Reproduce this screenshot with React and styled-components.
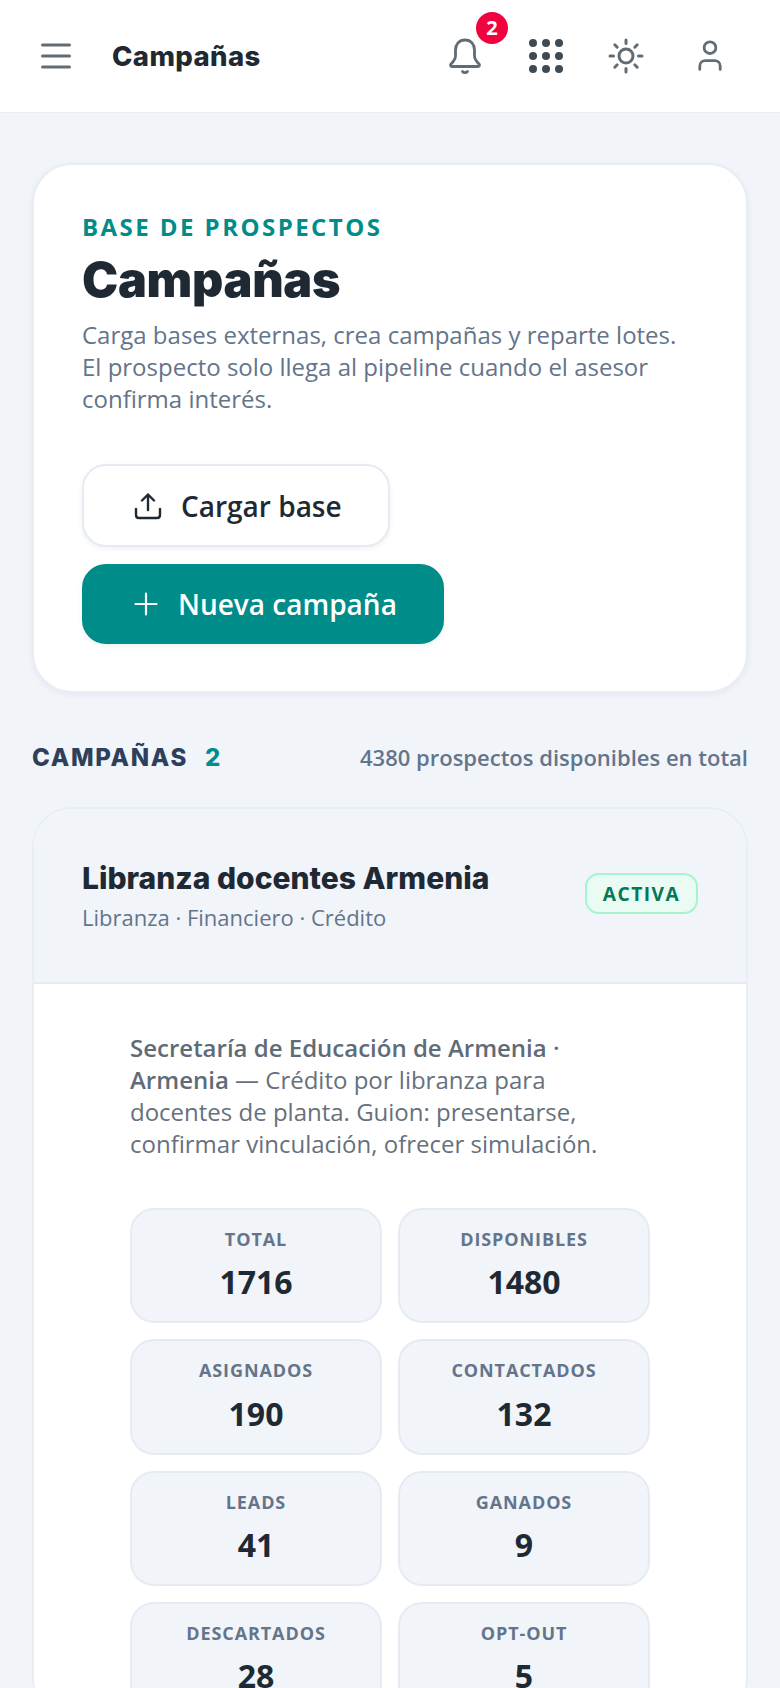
import React from "react";
import styled, { createGlobalStyle } from "styled-components";

const Global = createGlobalStyle`
  html, body { margin: 0; padding: 0; height: 1688px; overflow: hidden; background: #f1f4f9; }
  body { font-family: "Open Sans", "Noto Sans", sans-serif; color: #1f2933; }
  * { box-sizing: border-box; }
  #root { height: 1688px; overflow: hidden; }
`;

const Header = styled.header`
  height: 113px;
  background: #fff;
  border-bottom: 1px solid #e9edf3;
  display: flex;
  align-items: center;
  padding: 0 57px 0 41px;
`;
const Menu = styled.svg`
  width: 30px;
  height: 26px;
  display: block;
  margin-right: 41px;
`;
const HeaderTitle = styled.div`
  font-family: Inter, sans-serif;
  font-weight: 800;
  font-size: 27.5px;
  letter-spacing: 0.4px;
  color: #1f2933;
  flex: 1;
`;
const Icons = styled.div`
  display: flex;
  align-items: center;
`;
const IconSlot = styled.div`
  position: relative;
  width: ${(p) => p.$w}px;
  margin-right: ${(p) => p.$mr || 0}px;
  display: flex;
  justify-content: center;
  svg { display: block; }
`;
const Dot = styled.span`
  position: absolute;
  top: -26px;
  left: 28px;
  width: 32px;
  height: 32px;
  border-radius: 50%;
  background: #f0043f;
  color: #fff;
  font-size: 20px;
  font-weight: 700;
  display: flex;
  align-items: center;
  justify-content: center;
`;

const Main = styled.main`
  padding: 50px 32px 0;
`;
const Hero = styled.section`
  background: #fff;
  border: 2px solid #e9edf4;
  border-radius: 40px;
  box-shadow: 0 2px 6px rgba(30, 50, 80, 0.06);
  padding: 49px 48px 46px;
  height: 530px;
`;
const Eyebrow = styled.div`
  font-size: 24px;
  font-weight: 700;
  letter-spacing: 2.45px;
  line-height: 26px;
  color: #008c88;
`;
const HeroTitle = styled.h1`
  margin: 10px 0 0;
  font-family: Inter, sans-serif;
  font-weight: 900;
  font-size: 48.5px;
  line-height: 60px;
  letter-spacing: -0.3px;
  color: #1f2933;
`;
const HeroText = styled.p`
  margin: 9px 0 0;
  font-size: 24px;
  line-height: 32px;
  color: #64748b;
`;
const Buttons = styled.div`
  display: flex;
  flex-direction: column;
  align-items: flex-start;
  gap: 17px;
  margin-top: 49px;
`;
const Button = styled.div`
  display: flex;
  align-items: center;
  gap: ${(p) => (p.$primary ? 18 : 19)}px;
  padding-left: ${(p) => (p.$primary ? 48 : 50)}px;
  width: ${(p) => p.$w}px;
  height: ${(p) => p.$h}px;
  border-radius: 24px;
  font-size: 28px;
  font-weight: 600;
  background: ${(p) => (p.$primary ? "#008c88" : "#fff")};
  color: ${(p) => (p.$primary ? "#fff" : "#1f2933")};
  border: 2px solid ${(p) => (p.$primary ? "#008c88" : "#e6ebf3")};
  box-shadow: 0 2px 5px rgba(30, 50, 80, 0.07);
  svg { display: block; flex: none; }
`;

const SectionHead = styled.div`
  margin-top: 47px;
  height: 34px;
  display: flex;
  align-items: center;
  justify-content: space-between;
`;
const SectionTitle = styled.div`
  font-family: Inter, sans-serif;
  font-weight: 800;
  font-size: 24px;
  letter-spacing: 1.7px;
  color: #2d3f5b;
  span { color: #008c88; margin-left: 17px; }
`;
const SectionNote = styled.div`
  font-size: 22px;
  font-weight: 600;
  color: #64748b;
`;

const Card = styled.section`
  margin-top: 33px;
  background: #fff;
  border: 2px solid #e9edf4;
  border-radius: 40px;
  overflow: hidden;
`;
const CardHead = styled.div`
  background: #f1f4f9;
  border-bottom: 2px solid #e6ebf3;
  height: 175px;
  padding: 50px 48px 0;
  display: flex;
  justify-content: space-between;
  align-items: flex-start;
`;
const CardTitle = styled.h2`
  margin: 0;
  font-family: Inter, sans-serif;
  font-weight: 800;
  font-size: 30px;
  line-height: 38px;
  color: #1f2933;
`;
const CardSub = styled.div`
  margin-top: 5px;
  font-size: 22px;
  line-height: 30px;
  color: #64748b;
`;
const Badge = styled.div`
  margin-top: 14px;
  width: 113px;
  height: 41px;
  border-radius: 14px;
  background: #e9fbf3;
  border: 2px solid #a7f3d0;
  color: #047857;
  font-size: 19.2px;
  font-weight: 700;
  letter-spacing: 1.5px;
  display: flex;
  align-items: center;
  justify-content: center;
`;
const CardBody = styled.div`
  padding: 48px 96px 0;
`;
const Desc = styled.p`
  margin: 0;
  font-size: 24px;
  line-height: 32px;
  color: #66717d;
  b { font-weight: 600; color: #5f6b76; }
`;
const Stats = styled.div`
  margin-top: 48px;
  display: grid;
  grid-template-columns: 252px 252px;
  gap: 16px;
`;
const Stat = styled.div`
  background: #f1f4f9;
  border: 2px solid #e6ebf3;
  border-radius: 24px;
  padding: 17px 8px 17px;
  text-align: center;
`;
const StatLabel = styled.div`
  font-size: 18px;
  font-weight: 700;
  line-height: 25.3px;
  letter-spacing: 0.9px;
  color: #64748b;
`;
const StatValue = styled.div`
  margin-top: 8px;
  font-size: 32px;
  font-weight: 700;
  line-height: 44px;
  color: #1f2933;
`;

const stats = [
  ["TOTAL", "1716"],
  ["DISPONIBLES", "1480"],
  ["ASIGNADOS", "190"],
  ["CONTACTADOS", "132"],
  ["LEADS", "41"],
  ["GANADOS", "9"],
  ["DESCARTADOS", "28"],
  ["OPT-OUT", "5"],
];

const grey = "#626c74";

export default function App() {
  return (
    <>
      <Global />
      <Header>
        <Menu viewBox="0 0 30 26" fill="none" stroke={grey} strokeWidth="3" strokeLinecap="round">
          <path d="M1.5 2h27M1.5 13h27M1.5 24h27" />
        </Menu>
        <HeaderTitle>Campañas</HeaderTitle>
        <Icons>
          <IconSlot $w={34} $mr={47}>
            <svg width="34" height="37" viewBox="0 0 34 37" fill="none" stroke={grey} strokeWidth="2.8" strokeLinecap="round" strokeLinejoin="round">
              <path d="M17 2c-6 0-9.500 4.500-9.500 10v6c0 3-2 5.500-4.500 8-1 1.200-.4 2.500 1 2.500h26c1.400 0 2-1.300 1-2.500-2.500-2.500-4.500-5-4.500-8v-6C26.500 6.500 23 2 17 2z" />
              <path d="M14.500 33.500c1.300 1.500 3.700 1.500 5 0" />
            </svg>
            <Dot>2</Dot>
          </IconSlot>
          <IconSlot $w={34} $mr={45}>
            <svg width="34" height="34" viewBox="0 0 34 34" fill="#3e4b55">
              {[4, 17, 30].flatMap((y) =>
                [4, 17, 30].map((x) => <circle key={`${x}-${y}`} cx={x} cy={y} r="4" />)
              )}
            </svg>
          </IconSlot>
          <IconSlot $w={36} $mr={53}>
            <svg width="36" height="36" viewBox="0 0 36 36" fill="none" stroke={grey} strokeWidth="3" strokeLinecap="round">
              <circle cx="18" cy="18" r="7" />
              <path d="M18 2v3.500M18 30.500v3.500M2 18h3.500M30.500 18H34M6.800 6.800l2.400 2.400M26.800 26.800l2.400 2.400M6.800 29.200l2.400-2.400M26.800 9.200l2.400-2.400" />
            </svg>
          </IconSlot>
          <IconSlot $w={26}>
            <svg width="28" height="34" viewBox="0 0 28 34" fill="none" stroke={grey} strokeWidth="3" strokeLinecap="round">
              <circle cx="14" cy="8" r="6.300" />
              <path d="M3 31.500v-3.500c0-3.500 2.500-6 6-6h10c3.500 0 6 2.500 6 6v3.500" />
            </svg>
          </IconSlot>
        </Icons>
      </Header>
      <Main>
        <Hero>
          <Eyebrow>BASE DE PROSPECTOS</Eyebrow>
          <HeroTitle>Campañas</HeroTitle>
          <HeroText>
            Carga bases externas, crea campañas y reparte lotes.
            <br />
            El prospecto solo llega al pipeline cuando el asesor
            <br />
            confirma interés.
          </HeroText>
          <Buttons>
            <Button $w={308} $h={83}>
              <svg width="28" height="28" viewBox="0 0 28 28" fill="none" stroke="#1f2933" strokeWidth="2.4" strokeLinecap="round" strokeLinejoin="round">
                <path d="M14 18V2.500M8 8.500l6-6 6 6" />
                <path d="M2 17v6c0 1.800 1.200 3 3 3h18c1.800 0 3-1.200 3-3v-6" />
              </svg>
              Cargar base
            </Button>
            <Button $primary $w={362} $h={80}>
              <svg width="28" height="28" viewBox="0 0 28 28" fill="none" stroke="#fff" strokeWidth="2.2" strokeLinecap="round">
                <path d="M14 3.500v21M3.500 14h21" />
              </svg>
              Nueva campaña
            </Button>
          </Buttons>
        </Hero>
        <SectionHead>
          <SectionTitle>
            CAMPAÑAS<span>2</span>
          </SectionTitle>
          <SectionNote>4380 prospectos disponibles en total</SectionNote>
        </SectionHead>
        <Card>
          <CardHead>
            <div>
              <CardTitle>Libranza docentes Armenia</CardTitle>
              <CardSub>Libranza · Financiero · Crédito</CardSub>
            </div>
            <Badge>ACTIVA</Badge>
          </CardHead>
          <CardBody>
            <Desc>
              <b>
                Secretaría de Educación de Armenia ·
                <br />
                Armenia
              </b>{" "}
              — Crédito por libranza para
              <br />
              docentes de planta. Guion: presentarse,
              <br />
              confirmar vinculación, ofrecer simulación.
            </Desc>
            <Stats>
              {stats.map(([label, value]) => (
                <Stat key={label}>
                  <StatLabel>{label}</StatLabel>
                  <StatValue>{value}</StatValue>
                </Stat>
              ))}
            </Stats>
          </CardBody>
        </Card>
      </Main>
    </>
  );
}
